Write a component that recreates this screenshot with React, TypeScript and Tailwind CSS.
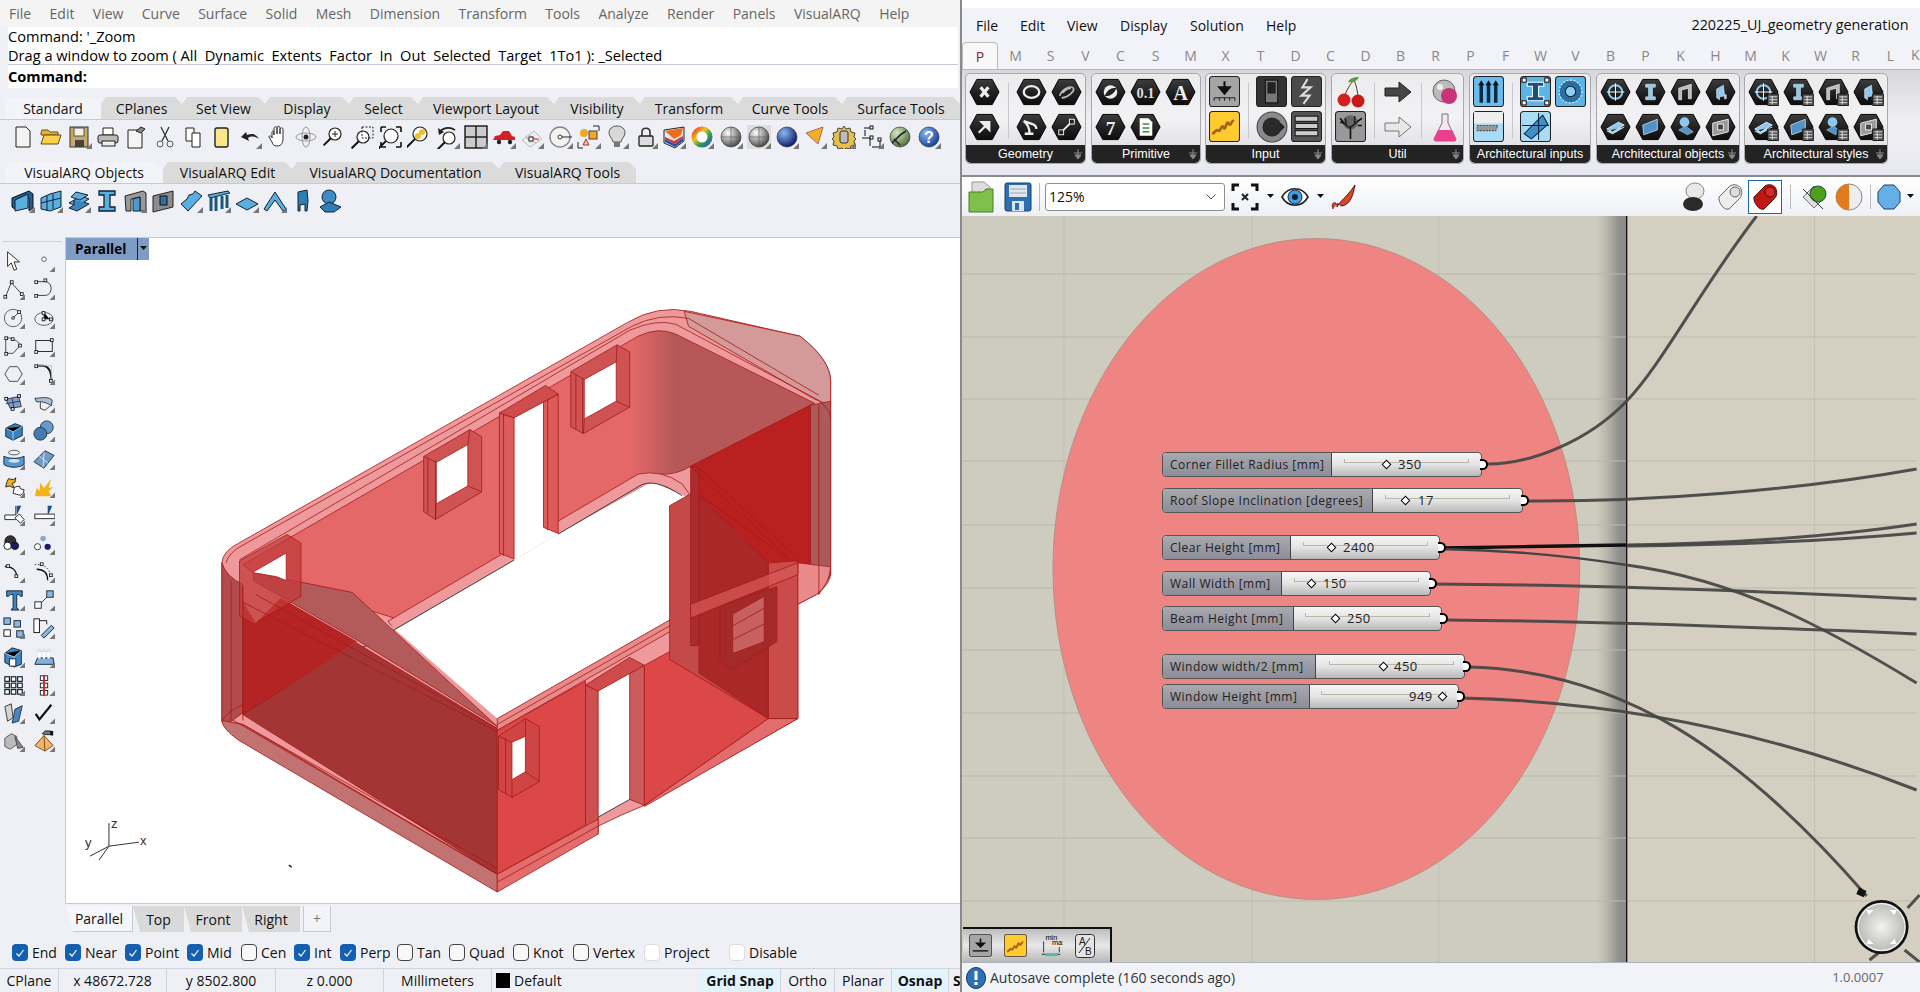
import type { ReactNode } from "react";

const FONT = "font-['Open_Sans','Liberation_Sans',sans-serif]";

// Small svg wrapper for the toolbar icons
function Ic({ children, tri, size = 24 }: { children: ReactNode; tri?: boolean; size?: number }) {
  return (
    <svg width={size} height={size} viewBox="0 0 24 24" className="shrink-0">
      {children}
      {tri && <polygon points="18,24 24,24 24,18" fill="#777" />}
    </svg>
  );
}

const glass = (x = 13, y = 9, r = 6) => (
  <>
    <circle cx={x} cy={y} r={r} fill="#fff" stroke="#222" strokeWidth="1.2" />
    <path d={`M${x - r * 0.7} ${y + r * 0.7} L${x - r * 1.9} ${y + r * 1.9}`} stroke="#111" strokeWidth="2" />
  </>
);

const ball = (id: string, a: string, b: string) => (
  <>
    <defs>
      <radialGradient id={id} cx="35%" cy="30%" r="75%">
        <stop offset="0" stopColor={a} />
        <stop offset="1" stopColor={b} />
      </radialGradient>
    </defs>
    <circle cx="12" cy="12" r="10" fill={`url(#${id})`} stroke="#222" strokeWidth="0.6" />
  </>
);

const standardIcons: { el: ReactNode; tri?: boolean }[] = [
  { el: <path d="M5 2h10l4 4v16H5z" fill="#f3f3f3" stroke="#222" /> },
  { el: <><path d="M2 8l1-3h6l2 2h8v3H2z" fill="#e5b53a" stroke="#6b4d10" /><path d="M2 19l3-9h17l-3 9z" fill="#fad24a" stroke="#6b4d10" /></> },
  { el: <><rect x="2" y="2" width="18" height="20" fill="#c8a866" stroke="#333" /><rect x="6" y="3" width="10" height="8" fill="#f3f0e4" stroke="#555" /><rect x="7" y="15" width="9" height="7" fill="#444" /></>, tri: true },
  { el: <><path d="M7 3h10v7H7z" fill="#fff" stroke="#222" /><rect x="2" y="10" width="20" height="8" rx="2" fill="#bbb" stroke="#222" /><rect x="6" y="16" width="13" height="5" fill="#eee" stroke="#222" /></> },
  { el: <><path d="M4 5h11l3 3v15H4z" fill="#f4f4f4" stroke="#222" /><path d="M12 6l5-4 4 2-4 4z" fill="#888" stroke="#222" /></> },
  { el: <><path d="M8 2l7 14M16 2L9 16" stroke="#333" strokeWidth="1.3" fill="none" /><circle cx="7" cy="19" r="3" fill="none" stroke="#555" /><circle cx="17" cy="19" r="3" fill="none" stroke="#555" /></> },
  { el: <><path d="M5 3h8v13H5z" fill="#fff" stroke="#222" /><path d="M11 8h8v14h-8z" fill="#fff" stroke="#222" /></> },
  { el: <rect x="6" y="3" width="13" height="19" rx="2" fill="#fbe789" stroke="#222" strokeWidth="1.4" /> },
  { el: <path d="M3 12l5-5 1 3c5-2 9-1 12 4-4-3-8-3-11-1l1 3z" fill="#222" />, tri: true },
  { el: <path d="M6 13V7c1-2 2-1 2 0v3-7c1-2 3-1 3 0v6-7c1-1 3-1 3 1v6-5c1-2 3-1 3 0v9c0 4-1 8-6 8-3 0-4-1-5-4l-3-5c0-2 2-1 3 0z" fill="#fff" stroke="#333" strokeWidth="1" /> },
  { el: <><ellipse cx="12" cy="12" rx="10" ry="4" fill="none" stroke="#999" /><ellipse cx="12" cy="12" rx="4" ry="10" fill="none" stroke="#999" /><circle cx="12" cy="12" r="2.5" fill="#222" /></> },
  { el: <>{glass()}<path d="M13 6v6M10 9h6" stroke="#222" /></> },
  { el: <>{glass(12, 12, 6)}<rect x="11" y="2" width="11" height="11" fill="none" stroke="#222" strokeDasharray="2 1.5" /></> },
  { el: <>{glass(12, 11, 7)}<path d="M2 2h5M2 2v5M22 2h-5M22 2v5M2 22h5M2 22v-5M22 22h-5M22 22v-5" stroke="#111" strokeWidth="1.6" fill="none" /></> },
  { el: <>{glass(13, 9, 7)}<circle cx="15" cy="7" r="3" fill="#f0c020" /><circle cx="11" cy="11" r="3" fill="#f0c020" /></> },
  { el: <>{glass(13, 13, 6)}<path d="M3 8c3-5 10-7 16-3" fill="none" stroke="#222" strokeWidth="1.6" /><path d="M2 3l1 7 5-3z" fill="#222" /></>, tri: true },
  { el: <><rect x="1" y="1" width="22" height="22" fill="#ccc" stroke="#222" strokeWidth="1.5" /><path d="M12 1v22M1 12h22" stroke="#222" strokeWidth="1.5" /></>, tri: true },
  { el: <><path d="M1 15l2-4 5-1 3-4h6l3 5 3 1v3z" fill="#d32020" /><circle cx="7" cy="17" r="2.2" fill="#222" /><circle cx="18" cy="17" r="2.2" fill="#222" /></>, tri: true },
  { el: <><path d="M2 15l12-9 8 8-12 8z" fill="#eee" stroke="#bbb" /><path d="M6 13l10 5M9 10l10 6M11 18l-5-7" stroke="#bbb" /><rect x="9" y="12" width="4" height="4" fill="#fff" stroke="#222" /><path d="M13 14h6" stroke="#c33" /></>, tri: true },
  { el: <><circle cx="11" cy="12" r="10" fill="#f3f3f3" stroke="#888" strokeWidth="1.4" /><circle cx="11" cy="12" r="2" fill="#fff" stroke="#333" /><path d="M13 12h10" stroke="#222" /></>, tri: true },
  { el: <><circle cx="7" cy="8" r="4" fill="#eaa92a" /><rect x="12" y="6" width="8" height="8" fill="#f2a922" stroke="#444" /><path d="M9 14l3 6H6z" fill="#f0c7a0" stroke="#a33" /><path d="M16 1h6v5M1 17v6h5" stroke="#222" fill="none" /></>, tri: true },
  { el: <><path d="M12 1c5 0 8 3 8 7 0 3-3 5-4 9H8C7 13 4 11 4 8c0-4 3-7 8-7z" fill="#d8d8d8" stroke="#555" /><rect x="9" y="17" width="6" height="5" fill="#777" /></>, tri: true },
  { el: <><path d="M8 11V7c0-5 8-5 8 0v4" fill="none" stroke="#333" strokeWidth="1.6" /><rect x="5" y="11" width="14" height="10" rx="1" fill="#ddd" stroke="#222" strokeWidth="1.3" /></>, tri: true },
  { el: <><path d="M2 5l20-3v14l-9 7-11-5z" fill="#e8e8ea" stroke="#222" /><path d="M3 6l18-3-2 7-7 4z" fill="#ee6b1c" /><path d="M3 14l10 5 8-6v3l-8 6-10-5z" fill="#2450a8" /><path d="M3 12l9 4 9-5v2l-8 6-10-5z" fill="#c43a3a" /></>, tri: true },
  { el: <circle cx="12" cy="12" r="8" fill="#fff" stroke="url(#wheel)" strokeWidth="5" />, tri: true },
  { el: <>{ball("sg1", "#fff", "#444")}<path d="M12 2v20M2 12h20" stroke="#555" strokeWidth="0.6" /></>, tri: true },
  { el: <><rect x="0" y="0" width="24" height="24" fill="#ddd" />{ball("sg2", "#fff", "#444")}<path d="M12 2v20M2 12h20" stroke="#555" strokeWidth="0.6" /></>, tri: true },
  { el: ball("sg3", "#8db6f0", "#04186b"), tri: true },
  { el: <path d="M3 8l17-6-5 17z" fill="#f2b024" stroke="#a66" />, tri: true },
  { el: <><path d="M12 1l2 3 4-1 1 4 4 1-1 4 2 2-2 2 1 4-4 1-1 3-4-1-2 2-2-2-4 1-1-3-4-1 1-4-2-2 2-2-1-4 4-1 1-4 4 1z" fill="#e6c04a" stroke="#444" /><rect x="8" y="6" width="8" height="12" rx="2" fill="#bbb" stroke="#333" /></>, tri: true },
  { el: <><path d="M4 3h6M5 5v6M2 13h8v8M12 22h8M20 15v7" stroke="#111" fill="none" /><rect x="10" y="1" width="3" height="3" fill="#fff" stroke="#111" /><rect x="10" y="11" width="3" height="3" fill="#fff" stroke="#111" /><rect x="18" y="13" width="3" height="3" fill="#fff" stroke="#111" /></>, tri: true },
  { el: <>{ball("sg4", "#d7e8c4", "#4d6a3a")}<path d="M4 18c4-3 5-7 14-12M6 14l6 6" stroke="#222" strokeWidth="1.6" fill="none" /></> },
  { el: <>{ball("sg5", "#8ab8ee", "#0d3e97")}<text x="12" y="18" textAnchor="middle" fontSize="16" fontWeight="700" fill="#fff" fontFamily="Liberation Sans">?</text></>, tri: true },
];

const blue = "#5aaee0";
const vaIcons: { el: ReactNode; tri?: boolean }[] = [
  { el: <><path d="M1 9l17-7 4 3v14l-4 3V9L5 13v8l-4-3z" fill="#1e5f94" stroke="#111" /><path d="M4 11l13-6v14L4 22z" fill={blue} stroke="#123" /></>, tri: true },
  { el: <><path d="M2 9l9-4 11-3v16l-11 4-9-2z" fill={blue} stroke="#123" /><path d="M8 7v15M14 5v15M2 14l20-5" stroke="#123" /></>, tri: true },
  { el: <><path d="M2 14l12-7 8 3-12 7z" fill={blue} stroke="#123" /><path d="M7 11v5l-5 3 8 3 12-7-5-2" fill="#3e85bd" stroke="#123" /><path d="M9 3l12 3-8 5-9-3z" fill={blue} stroke="#123" /></>, tri: true },
  { el: <path d="M4 2h16v4h-5v12h5v4H4v-4h5V6H4z" fill={blue} stroke="#123" strokeWidth="1.3" /> },
  { el: <><path d="M2 7l18-5 3 2v18l-6 0V8L8 10v12H3z" fill="#999" stroke="#222" /><path d="M10 10l7-2v14l-7 0z" fill="#4b9ad0" stroke="#123" /></>, tri: true },
  { el: <><path d="M2 7l20-5v16L2 23z" fill="#8c8c8c" stroke="#222" /><rect x="9" y="7" width="7" height="9" fill="#2f6fa0" stroke="#111" /></> },
  { el: <path d="M2 15l6-5 2-4 4-1 2-3 7 5-14 15z" fill={blue} stroke="#123" />, tri: true },
  { el: <><path d="M1 6l20-4 2 2-20 5z" fill={blue} stroke="#123" /><path d="M4 9v13M9 8v14M15 7v13M20 6v13" stroke="#1c567f" strokeWidth="3" /></>, tri: true },
  { el: <path d="M1 15l11-6 11 6-11 6z" fill={blue} stroke="#123" />, tri: true },
  { el: <path d="M1 20l11-17 11 17-3 2-8-11-8 11z" fill={blue} stroke="#123" />, tri: true },
  { el: <path d="M7 11V3l9-2 1 11-1 10h-2v-7l-5 1v6H7z" fill="#2e7fb5" stroke="#123" /> },
  { el: <><circle cx="10" cy="8" r="7" fill="#3e8cc2" stroke="#123" /><path d="M1 18l9-5 12 5-7 5H6z" fill="#2e7fb5" stroke="#123" /></> },
];

const toolIcons: ReactNode[] = [
  <path d="M5 2l13 11h-6l3 8-3 1-3-8-4 4z" fill="#fff" stroke="#222" />,
  <circle cx="12" cy="10" r="2.5" fill="#fff" stroke="#555" />,
  <><path d="M3 20L9 5l11 12" fill="none" stroke="#333" /><rect x="1" y="19" width="3" height="3" fill="#fff" stroke="#222" /><rect x="8" y="3" width="3" height="3" fill="#fff" stroke="#222" /><rect x="19" y="16" width="3" height="3" fill="#fff" stroke="#222" /></>,
  <><path d="M4 4h9c9 0 9 15 0 15H4" fill="none" stroke="#333" /><rect x="2" y="3" width="3" height="3" fill="#fff" stroke="#222" /><rect x="12" y="1" width="3" height="3" fill="#fff" stroke="#222" /><rect x="2" y="18" width="3" height="3" fill="#fff" stroke="#222" /></>,
  <><circle cx="11" cy="12" r="9.5" fill="none" stroke="#555" /><path d="M11 12l6-6" stroke="#333" /><circle cx="11" cy="12" r="1.5" fill="#fff" stroke="#222" /><rect x="16" y="4" width="3" height="3" fill="#fff" stroke="#222" /></>,
  <><ellipse cx="12" cy="13" rx="10" ry="7" fill="none" stroke="#555" /><path d="M12 6v7h6" stroke="#333" /><rect x="10" y="5" width="3" height="3" fill="#fff" stroke="#222" /><rect x="10" y="12" width="3" height="3" fill="#fff" stroke="#222" /><rect x="18" y="12" width="3" height="3" fill="#fff" stroke="#222" /></>,
  <><path d="M3 3v17h8l8-9c-3-5-9-8-16-8z" fill="none" stroke="#444" />{[[2, 2], [2, 19], [17, 10], [9, 3]].map(([x, y]) => <rect key={x * y} x={x} y={y} width="3" height="3" fill="#fff" stroke="#222" />)}</>,
  <><rect x="3" y="6" width="18" height="12" fill="none" stroke="#222" /><rect x="2" y="17" width="3" height="3" fill="#fff" stroke="#222" /><rect x="19" y="4" width="3" height="3" fill="#fff" stroke="#222" /></>,
  <path d="M7 4h9l5 8-5 8H7l-5-8z" fill="none" stroke="#444" />,
  <><path d="M4 3h6c8 0 10 7 10 16" fill="none" stroke="#111" strokeWidth="2" /><path d="M4 3h16v16" fill="none" stroke="#bbb" /><rect x="2" y="2" width="3" height="3" fill="#fff" stroke="#222" /><rect x="18" y="18" width="3" height="3" fill="#fff" stroke="#222" /></>,
  <><path d="M3 9l14-3 3 11-12 2z" fill="#7d9fc9" stroke="#333" /><path d="M10 8l2 11M3 14l16-3" stroke="#335" /><rect x="2" y="7" width="3" height="3" fill="#fff" stroke="#111" /><rect x="16" y="4" width="3" height="3" fill="#fff" stroke="#111" /><rect x="9" y="18" width="3" height="3" fill="#fff" stroke="#111" /></>,
  <><path d="M2 8c6 0 10-2 16 0l3 2-1 6c-6-4-12-5-16-4z" fill="#a9bfda" stroke="#333" /><path d="M8 12v7l5 2 6-5" fill="none" stroke="#333" /></>,
  <><path d="M3 9l10-5 8 3v10l-10 5-8-4z" fill="#3b80bb" stroke="#123" /><path d="M3 9l8 4 10-6M11 13v9" stroke="#a8d0ef" /></>,
  <><circle cx="15" cy="8" r="7" fill="#6a99cc" stroke="#234" /><circle cx="8" cy="15" r="7" fill="#467bb2" stroke="#234" /></>,
  <><ellipse cx="12" cy="5" rx="6" ry="2.5" fill="none" stroke="#555" /><path d="M1 9c6 3 16 3 22 0v9c-6 4-16 4-22 0z" fill="#5797cf" stroke="#123" /><ellipse cx="12" cy="14" rx="6" ry="2" fill="#cfe3f4" /></>,
  <><path d="M1 15L13 3l10 5-11 14z" fill="#7199c9" stroke="#234" /><path d="M7 9l10 8M12 5l-1 16" stroke="#dbe9f6" /></>,
  <><path d="M6 3l5 1 3-2-1 5-3 1 2 5-5-2-4 1 1-5z" fill="#eeb21e" stroke="#222" /><path d="M13 12l5-1 1 3 4 1-1 4-3 2-4-1-4-1 1-5z" fill="#fff" stroke="#222" /></>,
  <><path d="M2 22l2-9 3 3 1-9 4 6 8-10-3 10 5-1-5 5 3 5z" fill="#f2b21b" /></>,
  <><path d="M14 2v10H2v5h12" fill="#fff" stroke="#222" /><path d="M15 2h5l-5 10z" fill="#1c4f86" /><path d="M13 15l5-4 5 6-4 4z" fill="#fff" stroke="#222" /></>,
  <><path d="M16 2h5l-4 9h-1z" fill="#1c4f86" /><rect x="2" y="11" width="22" height="5" fill="#fff" stroke="#222" /></>,
  <><circle cx="8" cy="9" r="6" fill="#333" stroke="#111" /><circle cx="5" cy="14" r="4" fill="#fff" stroke="#111" /><circle cx="13" cy="14" r="4" fill="#1a1a70" stroke="#111" /></>,
  <><circle cx="11" cy="6" r="3" fill="#8ea9c8" /><circle cx="5" cy="15" r="3.4" fill="#fff" stroke="#333" /><circle cx="16" cy="15" r="3.4" fill="#1a1a70" /></>,
  <><path d="M2 6c8 0 13 4 13 12" fill="none" stroke="#111" strokeWidth="1.4" /><rect x="4" y="4" width="3" height="3" fill="#fff" stroke="#222" /><rect x="13" y="15" width="3" height="3" fill="#fff" stroke="#222" /></>,
  <><path d="M2 4c9-1 17 4 17 13" fill="none" stroke="#222" strokeDasharray="1.5 2" /><path d="M4 9c8 0 12 4 12 12" fill="none" stroke="#111" strokeWidth="1.4" /><rect x="8" y="2" width="3" height="3" fill="#fff" stroke="#222" /><rect x="18" y="14" width="3" height="3" fill="#fff" stroke="#222" /></>,
  <path d="M4 2h17v6h-2l-2-2h-2v15l2 1v1H9v-1l2-1V6H8L6 8H4z" fill="#3f86c4" stroke="#123" />,
  <><path d="M3 21L21 3" stroke="#333" /><rect x="2" y="14" width="7" height="7" fill="#fff" stroke="#222" /><rect x="15" y="2" width="7" height="7" fill="#8fb7dd" stroke="#222" /></>,
  <><rect x="1" y="1" width="7" height="7" fill="#8fb7dd" stroke="#123" /><rect x="1" y="14" width="7" height="7" fill="#fff" stroke="#111" /><rect x="12" y="4" width="7" height="7" fill="#8fb7dd" stroke="#123" /><rect x="15" y="15" width="7" height="7" fill="#8fb7dd" stroke="#123" /></>,
  <><rect x="1" y="2" width="6" height="15" fill="#fff" stroke="#111" /><path d="M7 4h8v4" fill="none" stroke="#111" /><path d="M9 20l11-11 3 3-11 11z" fill="#8fb7dd" stroke="#123" /></>,
  <><path d="M2 8l8-6 10 3v15l-8 3-10-5z" fill="#3f86c4" stroke="#123" /><path d="M2 8l10 4 8-7M12 12v11" stroke="#bcdaf1" /><path d="M7 22v-8h7v8z" fill="#fff" stroke="#123" /></>,
  <><path d="M2 20l3-7h17l1 7z" fill="#7fb0dd" stroke="#123" /><path d="M7 5v9M12 5v9M17 5v9" stroke="#fff" strokeWidth="2.4" /><path d="M5 6l2-3 2 3zM10 6l2-3 2 3zM15 6l2-3 2 3z" fill="#fff" stroke="#999" strokeWidth="0.4" /></>,
  <>{[3, 10, 17].flatMap((y) => [2, 9, 16].map((x) => <rect key={`${x}${y}`} x={x} y={y} width="5" height="5" fill="#fff" stroke="#123" strokeWidth="1.3" />))}</>,
  <><rect x="8" y="2" width="8" height="5" fill="#fff" stroke="#222" /><rect x="8" y="10" width="8" height="5" fill="#fff" stroke="#222" /><rect x="8" y="18" width="8" height="5" fill="#fff" stroke="#222" /><path d="M12 1v23" stroke="#c22" strokeWidth="2" /></>,
  <><path d="M2 5l7-3 2 15-6 4z" fill="#d4d4d4" stroke="#333" /><path d="M13 8l8-4-4 17-7 2z" fill="#4c83c1" stroke="#234" /></>,
  <path d="M3 13l4 6L20 3" stroke="#111" strokeWidth="2.4" fill="none" />,
  <><path d="M2 9l7-5 6 3v9l-7 5-6-3z" fill="#bbb" stroke="#555" /><path d="M16 20l-3-13 9 12z" fill="#888" stroke="#444" /></>,
  <><path d="M2 17L12 6l10 11-9 6z" fill="#f0b566" stroke="#7a4a14" /><path d="M12 6l1 17" stroke="#7a4a14" /><path d="M10 4l3-3h6v4h-6z" fill="#777" stroke="#222" /><rect x="19" y="1" width="3" height="5" fill="#111" /></>,
];

function Tab({ label, width, active }: { label: string; width: string; active?: boolean }) {
  return (
    <div
      className={`${width} h-full flex items-center justify-center text-[14px] text-[#111] [clip-path:polygon(5px_0,calc(100%-7px)_0,100%_7px,100%_100%,0_100%,0_7px)] ${
        active ? "bg-[#f3f4f9]" : "bg-[#dbdbdb]"
      }`}
    >
      {label}
    </div>
  );
}

function Check({ label, state, width }: { label: string; state: "on" | "off" | "faint"; width: string }) {
  return (
    <div className={`flex items-center ${width}`}>
      <div
        className={`w-[16px] h-[17px] rounded-[4px] flex items-center justify-center mr-[4px] ${
          state === "on" ? "bg-[#155fb0]" : state === "off" ? "border border-[#444] bg-[#f8f8f8]" : "border border-[#ddd] bg-white"
        }`}
      >
        {state === "on" && (
          <svg width="10" height="10" viewBox="0 0 10 10">
            <path d="M1.5 5.5l2.5 2.5 4.5-6" fill="none" stroke="#fff" strokeWidth="1.2" />
          </svg>
        )}
      </div>
      {label}
    </div>
  );
}

function StatusCell({ label, className }: { label: ReactNode; className: string }) {
  return <div className={`h-full flex items-center justify-center border-r border-[#cfd3dd] shrink-0 ${className}`}>{label}</div>;
}

// The house model, drawn in a 1568 x 1568 box that is stretched over the viewport
function Model() {
  const line = "#a81a1a";
  return (
    <g transform="translate(200 290) scale(0.4209 0.3954)" stroke={line} strokeWidth="2" strokeLinejoin="round">
      <defs>
        <linearGradient id="backWall" x1="1020" x2="1130" y1="0" y2="0" gradientUnits="userSpaceOnUse">
          <stop offset="0" stopColor="#e56868" />
          <stop offset="1" stopColor="#b65858" />
        </linearGradient>
      </defs>
      {/* shell */}
      <path d="M50 690Q52 660 90 640L1015 80Q1085 35 1165 52L1425 115Q1498 175 1498 230V720Q1495 745 1465 770L1420 795V1085L1055 1305L1000 1330L705 1480L100 1100L50 1090Z" fill="#ee9a9c" />
      <path d="M1150 52L1425 115Q1498 175 1498 230V290L1460 275L1160 90Z" fill="#d49a9a" />
      <path d="M100 695L1040 115Q1090 90 1130 110L1460 285L1165 445Q1130 468 1090 465L1040 470L740 665L460 830L130 720Z" fill="url(#backWall)" />
      <path d="M445 838L1040 465Q1095 452 1145 490L1165 520L1145 525Q1090 485 1050 497L460 860Z" fill="#ee9a9c" />
      <path d="M60 690Q65 665 100 645L1025 90Q1090 55 1160 70L1470 265M92 682L1020 100Q1085 70 1130 85L1470 278" fill="none" />
      {/* back wall openings */}
      <path d="M530 420L640 352L668 370V510L558 580L530 560Z" fill="#cf5353" />
      <path d="M560 435L635 390V495L560 540Z" fill="#fff" />
      <path d="M530 420L560 435M640 352L635 390M668 510L635 495M558 580L560 540M540 425V565M558 430V580" fill="none" />
      <path d="M880 205L990 137L1020 155V295L910 362L880 345Z" fill="#cf5353" />
      <path d="M912 225L988 180V280L912 325Z" fill="#fff" />
      <path d="M880 205L912 225M990 137L988 180M1020 295L988 280M910 362L912 325M892 212V352M908 222V362" fill="none" />
      <path d="M745 322L815 282V600L850 617L745 683Z" fill="#fff" stroke="none" />
      <path d="M710 310L745 322V680L710 665Z" fill="#dc5c5c" />
      <path d="M815 282L850 262V615L815 600Z" fill="#dc5c5c" />
      <path d="M710 310L820 240L850 262L745 322Z" fill="#cf4d4d" />
      <path d="M720 315V672M825 275V608" fill="none" />
      {/* floor opening */}
      <path d="M460 860L745 683L850 617L1050 497Q1075 480 1100 497L1160 525L1115 545V835L705 1085L430 830Z" fill="#fff" stroke="none" />
      <path d="M100 1075L460 860L745 683M850 617L1040 497Q1075 470 1145 520" fill="none" stroke="#222" strokeWidth="2" />
      {/* left end */}
      <path d="M50 690Q60 725 100 745V1070L75 1090Q50 1100 50 1090Z" fill="#b24c4c" />
      <path d="M100 790L130 845L190 780L370 890L100 1075Z" fill="#b52424" />
      <path d="M125 715L360 765L705 1105L370 885L190 775L125 735Z" fill="#b35a5a" />
      <path d="M92 685L205 618L238 640V775L125 845L92 825Z" fill="#c13b3b" fillOpacity="0.75" />
      <path d="M125 713L203 665V735L180 725L125 715Z" fill="#fff" />
      <path d="M100 1075L370 893L705 1110V1480Z" fill="#a33535" />
      <path d="M50 1090Q50 1110 90 1140L705 1525V1480L100 1100Z" fill="#c37272" />
      <path d="M50 1095Q55 1070 100 1050M130 770L705 1110M100 790L705 1118M75 1088L705 1480M100 1100L705 1465M100 750V1090M72 735V1090" fill="none" />
      {/* front wall */}
      <path d="M705 1085L1115 835L1420 690V720L1115 865L705 1115Z" fill="#e88a8a" />
      <path d="M705 1100L1115 850L1420 705" fill="none" />
      <path d="M705 1115L915 990V1355L705 1480Z" fill="#dc4748" />
      <path d="M945 1015L1020 970V1290L945 1335Z" fill="#fff" stroke="none" />
      <path d="M915 1000L945 1015V1378L915 1355Z" fill="#cc5050" />
      <path d="M1020 970L1055 950V1305L1020 1290Z" fill="#cc5c5c" />
      <path d="M915 1000L1020 930L1055 950L945 1015Z" fill="#cf4a4a" />
      <path d="M945 1335L1020 1290" fill="none" stroke="#222" strokeWidth="2" />
      <path d="M1055 950L1115 915L1350 1085L1055 1305Z" fill="#dc4748" />
      <path d="M705 1480V1525L945 1378V1340Z" fill="#e36c6c" />
      <path d="M705 1500L945 1358" fill="none" />
      <path d="M1055 1305L1350 1085H1420L1055 1308Z" fill="#e36c6c" />
      <path d="M708 1130L772 1085L805 1105V1245L740 1285L708 1265Z" fill="#cf4545" />
      <path d="M740 1145L772 1130V1220L740 1240Z" fill="#fff" />
      <path d="M708 1130L740 1145M772 1085V1130M805 1245L772 1220M740 1285V1240M725 1135V1275" fill="none" />
      {/* right block */}
      <path d="M1115 545L1165 515L1350 690V1085L1115 935Z" fill="#c44a4a" />
      <path d="M1165 445L1450 290V700L1350 690L1185 520Z" fill="#ba2020" />
      <path d="M1165 445L1185 450V900L1165 900Z" fill="#a92c2c" />
      <path d="M1185 520L1350 690V1085L1185 970Z" fill="#ab2828" />
      <path d="M1350 690L1420 685V1085H1350Z" fill="#cb4a4a" />
      <path d="M1450 290L1498 280V720L1470 770L1450 750Z" fill="#ab5a5a" />
      <path d="M1165 445L1400 680M1185 450L1420 680M1190 520L1395 680" fill="none" />
      <path d="M1235 800L1370 750V890L1265 960L1235 940Z" fill="#a42a2a" />
      <path d="M1265 820L1340 775V890L1265 920Z" fill="#c76060" />
      <path d="M1265 850L1340 805M1265 885L1340 845" fill="none" />
      <path d="M1420 690L1498 700Q1495 745 1465 770L1420 795Z" fill="#e88a8a" />
      <path d="M1165 795L1420 690V720L1165 830Z" fill="#d85a5a" fillOpacity="0.7" />
      <path d="M1470 280Q1500 300 1498 330M1470 290V770" fill="none" />
    </g>
  );
}

const sliders = [
  { label: "Corner Fillet Radius [mm]", value: "350", box: "left-[200px] top-[236px] w-[320px]", split: "w-[169px]", track: "left-[181px] w-[125px]", dia: "left-[220px]", val: "left-[235px]" },
  { label: "Roof Slope Inclination [degrees]", value: "17", box: "left-[200px] top-[272px] w-[361px]", split: "w-[210px]", track: "left-[222px] w-[125px]", dia: "left-[239px]", val: "left-[255px]" },
  { label: "Clear Height [mm]", value: "2400", box: "left-[200px] top-[319px] w-[278px]", split: "w-[128px]", track: "left-[140px] w-[125px]", dia: "left-[165px]", val: "left-[180px]" },
  { label: "Wall Width [mm]", value: "150", box: "left-[200px] top-[355px] w-[269px]", split: "w-[119px]", track: "left-[131px] w-[125px]", dia: "left-[145px]", val: "left-[160px]" },
  { label: "Beam Height [mm]", value: "250", box: "left-[200px] top-[390px] w-[280px]", split: "w-[131px]", track: "left-[142px] w-[125px]", dia: "left-[169px]", val: "left-[184px]" },
  { label: "Window width/2 [mm]", value: "450", box: "left-[200px] top-[438px] w-[303px]", split: "w-[153px]", track: "left-[166px] w-[125px]", dia: "left-[217px]", val: "left-[231px]" },
  { label: "Window Height [mm]", value: "949", box: "left-[200px] top-[468px] w-[297px]", split: "w-[147px]", track: "left-[158px] w-[125px]", dia: "left-[276px]", val: "left-[246px]" },
];

function Slider({ s }: { s: (typeof sliders)[number] }) {
  return (
    <div className={`absolute ${s.box} h-[25px] flex rounded-[4px] border border-[#555] bg-gradient-to-b from-[#f6f6f6] via-[#e4e4e4] to-[#b9b9b9] text-[12px] tracking-[0.5px] text-[#222]`}>
      <div className={`${s.split} shrink-0 h-full flex items-center pl-[7px] rounded-l-[4px] border-r border-[#444] bg-gradient-to-b from-[#a9a9b0] to-[#8d8d99] whitespace-nowrap`}>
        {s.label}
      </div>
      <div className={`absolute ${s.track} top-[6px] h-[4px] border-b border-l border-r border-[#b9b8aa]`} />
      <div className={`absolute ${s.dia} top-[8px] w-[7px] h-[7px] rotate-45 bg-white border-[1.5px] border-black`} />
      <div className={`absolute ${s.val} top-[2px] text-[13px]`}>{s.value}</div>
      <div className="absolute -right-[7px] top-[6px] w-[8px] h-[11px] rounded-r-full bg-white border-2 border-l-0 border-black" />
    </div>
  );
}

const wires = [
  "M1482 464C1530 466 1590 440 1627 401S1700 290 1757 216",
  "M1525 501C1650 502 1800 490 1917 469",
  "M1627 545C1720 544 1830 537 1917 524",
  "M1627 546C1720 545 1830 541 1917 533",
  "M1627 565C1740 580 1830 630 1917 683",
  "M1433 584C1600 585 1780 592 1917 599",
  "M1445 620C1620 621 1800 629 1917 634",
  "M1468 667C1620 670 1740 750 1867 896",
  "M1461 698C1640 702 1790 740 1917 790",
  "M1908 908L1920 895M1870 960L1880 952M1905 950L1920 962",
];

const ribbonLetters = "M S V C S M X T D C D B R P F W V B P K H M K W R L".split(" ");

function Hex({ children }: { children?: ReactNode }) {
  return (
    <svg width="31" height="28" viewBox="0 0 32 28" className="shrink-0">
      <defs>
        <linearGradient id="hexFill" x1="0" x2="0" y1="0" y2="1">
          <stop offset="0" stopColor="#3c3c3c" />
          <stop offset="0.5" stopColor="#222" />
          <stop offset="1" stopColor="#0d0d0d" />
        </linearGradient>
      </defs>
      <polygon points="1,14 8,1 24,1 31,14 24,27 8,27" fill="url(#hexFill)" stroke="#000" />
      {children}
    </svg>
  );
}

function Sq({ children, bg = "#3a3a3a", size = 31 }: { children?: ReactNode; bg?: string; size?: number }) {
  return (
    <svg width={size} height={size} viewBox="0 0 30 30" className="shrink-0">
      <rect x="0.5" y="0.5" width="29" height="29" rx="3" fill={bg} stroke="#222" />
      {children}
    </svg>
  );
}

function Cell({ children }: { children?: ReactNode }) {
  return <div className="w-[35px] h-[35px] flex items-center justify-center">{children}</div>;
}

function Label({ text, plus = true }: { text: string; plus?: boolean }) {
  return (
    <div className="absolute left-0 right-0 bottom-0 h-[18px] rounded-b-[5px] bg-[#232323] flex items-center justify-center font-['Liberation_Sans',sans-serif] text-[12.5px] leading-none text-white whitespace-nowrap">
      {text}
      {plus && (
        <svg width="10" height="10" viewBox="0 0 10 10" className="absolute right-[2px] top-[4px]">
          <path d="M5 0v6M1 4h8M2 6h6L5 10z" stroke="#888" fill="#888" />
        </svg>
      )}
    </div>
  );
}

function Group({ width, label, plus, children }: { width: string; label: string; plus?: boolean; children: ReactNode }) {
  return (
    <div className={`relative ${width} h-[91px] shrink-0 rounded-[5px] border border-[#a9a9ad] bg-gradient-to-b from-[#ececee] via-[#f2f2f4] to-[#d9d9de] flex items-start pl-[1px]`}>
      {children}
      <Label text={label} plus={plus} />
    </div>
  );
}

const Col = ({ children }: { children: ReactNode }) => <div className="grid grid-rows-[35px_35px] grid-flow-col auto-cols-[35px]">{children}</div>;
const Sep = () => <div className="w-px h-[56px] my-[9px] mx-[5.5px] bg-[#c8c8cc] shrink-0" />;

const hexStroke = { fill: "none", stroke: "#eee", strokeWidth: 2.4 };
const archBlue = "#8fc8ee";

function HexBadge() {
  return (
    <g>
      <rect x="20" y="16" width="12" height="12" rx="1" fill="#555" stroke="#111" />
      <path d="M22 19h8M22 22h8M22 25h8M25 18v9" stroke="#ddd" />
    </g>
  );
}

const archGlyphs = {
  target: <><circle cx="16" cy="14" r="7" fill="none" stroke={archBlue} strokeWidth="2" /><path d="M16 5v18M7 14h18" stroke="#fff" /></>,
  column: <path d="M11 6h10v3h-3v10h3v3H11v-3h3V9h-3z" fill={archBlue} stroke="#fff" strokeWidth="0.5" />,
  door: <path d="M9 22V10l13-4v15h-3V10l-7 2v10z" fill="#bbb" stroke="#fff" strokeWidth="0.6" />,
  chair: <path d="M12 20v-9l7-4 1 9 2 1v4h-2v-3l-5 1v3z" fill={archBlue} stroke="#fff" strokeWidth="0.5" />,
  beam: <path d="M7 16l12-7 6 3-12 7zM7 18l6 3 12-7" fill={archBlue} stroke="#fff" strokeWidth="0.8" />,
  wall: <path d="M8 12l15-6v11L9 22z" fill="#4f93c8" stroke="#ddd" strokeWidth="0.8" />,
  person: <><circle cx="15" cy="9" r="5" fill={archBlue} /><path d="M9 17l7-4 8 6-6 3z" fill="#4f93c8" stroke="#ddd" strokeWidth="0.5" /></>,
  window: <><path d="M8 10l16-4v13L8 23z" fill="#999" stroke="#eee" /><rect x="13" y="11" width="6" height="6" fill="#444" stroke="#eee" /></>,
};

function Ribbon() {
  const g = archGlyphs;
  return (
    <div className="h-[107px] shrink-0 flex items-start pt-[3px] pl-[3px] bg-gradient-to-b from-[#d8d8dc] via-[#f0f0f4] to-[#e8e9f0] border-b-2 border-[#8b8b8b]">
      <div className="w-[121px] shrink-0 mr-[5px]">
        <Group width="w-[121px]" label="Geometry" plus>
          <Col>
            <Cell><Hex><path d="M12 9l8 10M20 9l-8 10" stroke="#eee" strokeWidth="3.4" /></Hex></Cell>
            <Cell><Hex><path d="M10 20l10-10M13 9h8v8z" stroke="#eee" strokeWidth="2.2" fill="#eee" /></Hex></Cell>
          </Col>
          <Sep />
          <Col>
            <Cell><Hex><ellipse cx="16" cy="14" rx="8" ry="6" {...hexStroke} /></Hex></Cell>
            <Cell><Hex><path d="M9 21h9M14 21c0-6-2-10-6-13l9 3c3 1 4 3 4 5" {...hexStroke} /></Hex></Cell>
            <Cell><Hex><path d="M9 18c2-7 12-11 14-8s-6 10-12 10M12 15c3-4 7-6 8-4" fill="none" stroke="#bbb" strokeWidth="1.8" /></Hex></Cell>
            <Cell><Hex><path d="M11 19l10-10" stroke="#eee" strokeWidth="2" /><rect x="8" y="17" width="5" height="5" fill="#222" stroke="#eee" /><rect x="19" y="6" width="5" height="5" fill="#222" stroke="#eee" /></Hex></Cell>
          </Col>
        </Group>
      </div>
      <div className="mr-[4px]">
        <Group width="w-[110px]" label="Primitive" plus>
          <Col>
            <Cell><Hex><circle cx="16" cy="14" r="7" fill="#eee" /><path d="M10 18c4 1 10-2 12-8-2 0-8-1-12 8z" fill="#222" /></Hex></Cell>
            <Cell><Hex><text x="16" y="22" textAnchor="middle" fontSize="20" fontWeight="700" fontFamily="Liberation Serif" fill="#eee">7</text></Hex></Cell>
            <Cell><Hex><text x="16" y="20" textAnchor="middle" fontSize="15" fontWeight="700" fontFamily="Liberation Serif" fill="#ddd">0.1</text></Hex></Cell>
            <Cell><Hex><path d="M10 5h9l4 4v14H10z" fill="#fff" /><path d="M13 11h7M13 15h7M13 19h7" stroke="#3a8a3a" strokeWidth="1.6" /></Hex></Cell>
            <Cell><Hex><text x="16" y="22" textAnchor="middle" fontSize="21" fontWeight="700" fontFamily="Liberation Serif" fill="#eee">A</text></Hex></Cell>
          </Col>
        </Group>
      </div>
      <div className="mr-[5px]">
        <Group width="w-[121px]" label="Input" plus>
          <Col>
            <Cell>
              <Sq bg="#a5a5a5"><path d="M15 5v9M10 11l5 6 5-6z" stroke="#111" fill="#111" strokeWidth="2" /><path d="M5 21h20M5 21v3M10 21v3M15 21v3M20 21v3M25 21v3" stroke="#222" /></Sq>
            </Cell>
            <Cell>
              <Sq bg="#ffcb2f"><path d="M3 22c3-1 4-5 6-3s3-7 5-3 3-8 5-4 3-4 5-2" fill="none" stroke="#a9601a" strokeWidth="2.6" /></Sq>
            </Cell>
          </Col>
          <Sep />
          <Col>
            <Cell>
              <Sq bg="#333"><rect x="9" y="4" width="12" height="22" fill="#777" stroke="#111" /><rect x="11" y="6" width="8" height="11" fill="#222" /></Sq>
            </Cell>
            <Cell>
              <svg width="32" height="32" viewBox="0 0 30 30">
                <circle cx="15" cy="15" r="14" fill="#8b8b8b" stroke="#444" />
                <circle cx="15" cy="15" r="9" fill="#2a2a2a" />
                <path d="M23 11l4 4-4 4z" fill="#222" />
              </svg>
            </Cell>
            <Cell>
              <Sq bg="#4a4a4a"><path d="M16 3l-5 8h8l-9 8h8l-6 8" fill="none" stroke="#ddd" strokeWidth="2" /></Sq>
            </Cell>
            <Cell>
              <Sq bg="#555"><rect x="4" y="5" width="22" height="5" fill="#ccc" stroke="#111" /><rect x="4" y="12" width="22" height="5" fill="#ccc" stroke="#111" /><rect x="4" y="19" width="22" height="5" fill="#ccc" stroke="#111" /></Sq>
            </Cell>
          </Col>
        </Group>
      </div>
      <div className="mr-[5px]">
        <Group width="w-[133px]" label="Util" plus>
          <Col>
            <Cell>
              <svg width="30" height="32" viewBox="0 0 30 32">
                <path d="M8 22c2-7 6-14 10-18M22 23c0-8-2-14-4-19" fill="none" stroke="#5a3a1a" />
                <path d="M12 6c3-5 8-5 11-5-2 4-5 6-11 5z" fill="#5aa03a" />
                <circle cx="8" cy="24" r="6.5" fill="#d41f1f" />
                <circle cx="22" cy="25" r="6.5" fill="#c81818" />
              </svg>
            </Cell>
            <Cell>
              <Sq bg="#999"><path d="M15 27V14M15 17L7 11M15 16l8-7M9 12L5 7M11 14l-1-7M19 12l0-7M22 10l4-3M5 11h4M22 14l4 0" stroke="#111" strokeWidth="1.6" fill="none" /><circle cx="15" cy="11" r="7" fill="#333" fillOpacity="0.5" /></Sq>
            </Cell>
          </Col>
          <Sep />
          <Col>
            <Cell><svg width="28" height="22" viewBox="0 0 28 22"><path d="M1 7h14V1l12 10-12 10v-6H1z" fill="#454545" stroke="#222" /></svg></Cell>
            <Cell><svg width="28" height="22" viewBox="0 0 28 22"><path d="M1 7h14V1l12 10-12 10v-6H1z" fill="#e8e8e8" stroke="#777" /></svg></Cell>
          </Col>
          <Sep />
          <Col>
            <Cell><svg width="28" height="28" viewBox="0 0 28 28"><circle cx="13" cy="13" r="11" fill="#bbb" stroke="#666" /><circle cx="18" cy="18" r="8" fill="#c8327a" /><circle cx="9" cy="9" r="3" fill="#eee" /></svg></Cell>
            <Cell><svg width="26" height="30" viewBox="0 0 26 30"><path d="M10 2h6v9l8 16c0 2-1 2-3 2H5c-2 0-3 0-3-2l8-16z" fill="#f6e6ee" stroke="#777" /><path d="M6 18h14l4 9c0 2-1 2-3 2H5c-2 0-3 0-3-2z" fill="#e8408f" /></svg></Cell>
          </Col>
        </Group>
      </div>
      <div className="mr-[5px]">
        <Group width="w-[122px]" label="Architectural inputs" plus={false}>
          <Col>
            <Cell><Sq bg="#6bbcee"><path d="M8 26V8M15 26V8M22 26V8" stroke="#0d2a44" strokeWidth="3.4" /><path d="M5 9l3-5 3 5zM12 9l3-5 3 5zM19 9l3-5 3 5z" fill="#111" /></Sq></Cell>
            <Cell><Sq bg="#a9dcf4"><rect x="1" y="1" width="28" height="11" fill="#eee" /><path d="M4 14h20l-2 5H4z" fill="#999" stroke="#555" strokeDasharray="2 1" /></Sq></Cell>
          </Col>
          <Sep />
          <Col>
            <Cell><Sq bg="#5bb5e6"><path d="M7 6h16v4h-5v10h5v4H7v-4h5V10H7z" fill="#1c4f78" stroke="#fff" /><rect x="2" y="2" width="4" height="4" fill="#fff" stroke="#111" /><rect x="24" y="2" width="4" height="4" fill="#fff" stroke="#111" /><rect x="2" y="24" width="4" height="4" fill="#fff" stroke="#111" /><rect x="24" y="24" width="4" height="4" fill="#fff" stroke="#111" /></Sq></Cell>
            <Cell><Sq bg="#a9dcf4"><path d="M4 22L22 4l5 9-16 14z" fill="#3f8fca" stroke="#123" /><path d="M2 14h26M18 2v26" stroke="#123" /></Sq></Cell>
            <Cell><Sq bg="#5bb5e6"><circle cx="15" cy="15" r="11" fill="#2a6ea3" stroke="#fff" strokeDasharray="2 1.4" /><circle cx="15" cy="15" r="5" fill="#8fd0f2" stroke="#123" /></Sq></Cell>
          </Col>
        </Group>
      </div>
      <div className="mr-[4px]">
        <Group width="w-[144px]" label="Architectural objects" plus>
          <Col>
            <Cell><Hex>{g.target}</Hex></Cell>
            <Cell><Hex>{g.beam}</Hex></Cell>
            <Cell><Hex>{g.column}</Hex></Cell>
            <Cell><Hex>{g.wall}</Hex></Cell>
            <Cell><Hex>{g.door}</Hex></Cell>
            <Cell><Hex>{g.person}</Hex></Cell>
            <Cell><Hex>{g.chair}</Hex></Cell>
            <Cell><Hex>{g.window}</Hex></Cell>
          </Col>
        </Group>
      </div>
      <Group width="w-[144px]" label="Architectural styles" plus>
        <Col>
          <Cell><Hex>{g.target}<HexBadge /></Hex></Cell>
          <Cell><Hex>{g.beam}<HexBadge /></Hex></Cell>
          <Cell><Hex>{g.column}<HexBadge /></Hex></Cell>
          <Cell><Hex>{g.wall}<HexBadge /></Hex></Cell>
          <Cell><Hex>{g.door}<HexBadge /></Hex></Cell>
          <Cell><Hex>{g.person}<HexBadge /></Hex></Cell>
          <Cell><Hex>{g.chair}<HexBadge /></Hex></Cell>
          <Cell><Hex>{g.window}<HexBadge /></Hex></Cell>
        </Col>
      </Group>
    </div>
  );
}

function Caret() {
  return (
    <svg width="7" height="5" viewBox="0 0 7 5" className="shrink-0">
      <path d="M0 0h7L3.5 4z" fill="#111" />
    </svg>
  );
}

function GhToolbar() {
  return (
    <div className="h-[39px] shrink-0 flex items-center bg-gradient-to-b from-white to-[#eef0f6] pl-[5px]">
      <svg width="26" height="32" viewBox="0 0 26 32" className="ml-[1px]">
        <path d="M4 1h12l6 5v8H4z" fill="#ddd" stroke="#999" />
        <path d="M1 11h14l3-3h7v23H1z" fill="#7fc04a" stroke="#4a7a2a" />
      </svg>
      <svg width="28" height="30" viewBox="0 0 28 30" className="ml-[10px]">
        <rect x="1" y="1" width="26" height="28" rx="2" fill="#2d6eb0" stroke="#17406e" />
        <rect x="5" y="3" width="18" height="12" fill="#dfe6ee" />
        <path d="M6 7h16M6 11h16" stroke="#9ab" />
        <rect x="8" y="19" width="12" height="10" fill="#d9e4ef" />
        <rect x="11" y="21" width="4" height="7" fill="#2d6eb0" />
      </svg>
      <div className="w-px h-[28px] bg-[#bbb] ml-[7px]" />
      <div className="w-[180px] h-[28px] ml-[5px] bg-white border border-[#8f8f8f] rounded-[3px] flex items-center justify-between pl-[3px] pr-[8px] text-[14px] text-[#111]">
        125%
        <svg width="10" height="6" viewBox="0 0 10 6"><path d="M0.5 0.5L5 5l4.5-4.5" fill="none" stroke="#555" /></svg>
      </div>
      <svg width="28" height="28" viewBox="0 0 28 28" className="ml-[6px]">
        <path d="M8 2H2v6M20 2h6v6M8 26H2v-6M20 26h6v-6" fill="none" stroke="#111" strokeWidth="3" />
        <path d="M11 11l6 6M17 11l-6 6" stroke="#222" strokeWidth="2" />
      </svg>
      <div className="ml-[8px]"><Caret /></div>
      <svg width="28" height="20" viewBox="0 0 28 20" className="ml-[7px]">
        <path d="M1 10c6-11 20-11 26 0-6 11-20 11-26 0z" fill="#fff" stroke="#222" strokeWidth="1.6" />
        <circle cx="14" cy="10" r="7" fill="#3fa0dd" stroke="#124" />
        <circle cx="14" cy="10" r="3" fill="#102030" />
      </svg>
      <div className="ml-[8px]"><Caret /></div>
      <svg width="28" height="28" viewBox="0 0 28 28" className="ml-[6px]">
        <path d="M3 26c-3-8 5-8 4-2 2-5 10-10 18-22-2 10-4 19-13 21-2 0-3-3-5-2" fill="#d8442a" stroke="#5a1a10" />
      </svg>
      <div className="flex-1" />
      <svg width="24" height="30" viewBox="0 0 24 30" className="mr-[10px]">
        <ellipse cx="13" cy="9" rx="9" ry="8" fill="#e8e8e8" stroke="#888" />
        <ellipse cx="11" cy="22" rx="10" ry="7" fill="#2a2a2a" />
      </svg>
      <svg width="28" height="28" viewBox="0 0 28 28" className="mr-[4px]">
        <path d="M3 14L14 3c3-2 9-2 11 3s0 8-2 10L13 26c-5 2-11-7-10-12z" fill="#eee" stroke="#666" />
        <ellipse cx="19" cy="9" rx="5" ry="5" fill="#ddd" stroke="#666" />
      </svg>
      <div className="w-[34px] h-[34px] border border-[#1a67a8] bg-white flex items-center justify-center">
        <svg width="28" height="28" viewBox="0 0 28 28">
          <path d="M3 14L14 3c3-2 9-2 11 3s0 8-2 10L13 26c-5 2-11-7-10-12z" fill="#bf1616" stroke="#5a0c0c" />
          <ellipse cx="19" cy="9" rx="5" ry="5" fill="#d32a2a" stroke="#5a0c0c" />
        </svg>
      </div>
      <div className="w-px h-[24px] bg-[#bbb] ml-[8px] mr-[9px]" />
      <svg width="28" height="28" viewBox="0 0 28 28" className="mr-[7px]">
        <path d="M3 14L14 3l11 11-11 11z" fill="#ddd" stroke="#777" />
        <circle cx="18" cy="11" r="8" fill="#4c9e1f" stroke="#254" />
        <path d="M3 6l20 20" stroke="#333" />
      </svg>
      <svg width="28" height="28" viewBox="0 0 28 28" className="mr-[7px]">
        <circle cx="14" cy="14" r="13" fill="#eee" stroke="#888" />
        <path d="M14 1a13 13 0 0 0 0 26z" fill="#e27a1e" />
      </svg>
      <div className="w-px h-[24px] bg-[#bbb] mr-[6px]" />
      <svg width="24" height="26" viewBox="0 0 24 26" className="mr-[6px]">
        <path d="M7 1h10l6 7v10l-6 7H7l-6-7V8z" fill="#66aee6" stroke="#1d3f6a" />
      </svg>
      <div className="mr-[6px]"><Caret /></div>
    </div>
  );
}

function Canvas() {
  const hGrid = [274, 337, 399, 461, 525, 588, 650, 713, 776, 838, 901];
  const vGrid = [1064, 1252, 1439, 1815];
  return (
    <div className="relative flex-1 overflow-hidden bg-[#d5cfc2]">
      <svg className="absolute inset-0 w-full h-full" viewBox="962 216 958 746" preserveAspectRatio="none">
        <defs>
          <linearGradient id="edge" x1="0" x2="1" y1="0" y2="0">
            <stop offset="0" stopColor="#cecbbf" />
            <stop offset="0.35" stopColor="#b8b6ab" />
            <stop offset="0.75" stopColor="#8f8f8c" />
            <stop offset="1" stopColor="#8a8a8a" />
          </linearGradient>
          <radialGradient id="dial"><stop offset="0" stopColor="#f2f2f2" /><stop offset="1" stopColor="#bcbcb8" /></radialGradient>
        </defs>
        <rect x="962" y="216" width="665" height="746" fill="#cecbbf" />
        <rect x="1597" y="216" width="30" height="746" fill="url(#edge)" />
        {hGrid.map((y) => <path key={y} d={`M962 ${y}H1917`} stroke="#bbb8ab" strokeWidth="1" />)}
        {vGrid.map((x) => <path key={x} d={`M${x} 216V962`} stroke="#c2c0b6" strokeWidth="1" />)}
        <ellipse cx="1316.5" cy="569" rx="263.5" ry="330.5" fill="#ef8582" stroke="#b18a7e" strokeWidth="0.8" />
        <path d="M1627 216V962" stroke="#000" strokeWidth="1.2" />
        {wires.map((d) => <path key={d} d={d} fill="none" stroke="#444" strokeOpacity="0.92" strokeWidth="3" />)}
        <path d="M1442 548C1500 547 1570 546 1627 545" fill="none" stroke="#111" strokeWidth="3.4" />
        <path d="M1442 549C1500 550 1570 556 1627 565" fill="none" stroke="#444" strokeWidth="2.4" />
        <rect x="1858" y="889" width="8" height="7" fill="#111" transform="rotate(25 1862 892)" />
        <ellipse cx="1882" cy="927" rx="27" ry="27" fill="#111" />
        <circle cx="1882" cy="927" r="23.5" fill="url(#dial)" stroke="#eee" strokeWidth="1.5" />
        <path d="M1867 910l7 0-5 5zM1897 910l-7 0 5 5zM1867 944l7 0-5-5zM1897 944l-7 0 5-5z" fill="#fff" />
      </svg>
      <div className={FONT}>
        {sliders.map((s) => <Slider key={s.label} s={s} />)}
      </div>
      {/* bottom-left widget toolbar */}
      <div className="absolute left-[1px] bottom-0 w-[149px] h-[35px] border-t-2 border-r-2 border-[#111] bg-gradient-to-b from-[#bdbdbd] via-[#e8e8e8] to-[#b8b8b8] flex items-center pl-[6px] gap-[12px]">
        <Sq bg="#a5a5a5" size={23}><path d="M15 6v9M10 12l5 5 5-5z" stroke="#111" fill="#111" strokeWidth="2" /><path d="M5 22h20" stroke="#222" strokeWidth="2" /></Sq>
        <Sq bg="#ffcb2f" size={23}><path d="M4 23c3-1 4-5 6-3s3-7 5-3 3-8 5-4 3-4 5-2" fill="none" stroke="#a9601a" strokeWidth="2.6" /></Sq>
        <svg width="24" height="28" viewBox="0 0 26 30">
          <text x="7" y="8" fontSize="8" fontFamily="Liberation Sans">min</text>
          <text x="14" y="14" fontSize="8" fontFamily="Liberation Sans">max</text>
          <path d="M5 10v12M22 16v6" stroke="#333" />
          <path d="M3 24h20" stroke="#222" />
          <rect x="7" y="23" width="13" height="3" fill="#58b7a5" />
        </svg>
        <svg width="20" height="24" viewBox="0 0 20 24">
          <rect x="0.5" y="0.5" width="19" height="23" rx="3" fill="#e4e4e4" stroke="#333" />
          <text x="4" y="11" fontSize="10" fontFamily="Liberation Sans" fill="#222">A</text>
          <path d="M4 19L15 4" stroke="#222" />
          <text x="10" y="21" fontSize="10" fontFamily="Liberation Sans" fill="#222">B</text>
        </svg>
      </div>
    </div>
  );
}

export default function App() {
  return (
    <div className={`w-[1920px] h-[992px] flex overflow-hidden bg-white ${FONT}`}>
      {/* Rhino window */}
      <div className="w-[960px] h-full flex flex-col bg-[#eff0f5] shrink-0">
        <div className="h-[27px] shrink-0 flex items-center gap-[18.4px] pl-[9px] text-[14px] text-[#666] bg-[#f4f4f4]">
          {["File", "Edit", "View", "Curve", "Surface", "Solid", "Mesh", "Dimension", "Transform", "Tools", "Analyze", "Render", "Panels", "VisualARQ", "Help"].map((m) => (
            <span key={m}>{m}</span>
          ))}
        </div>
        <div className="h-[61px] shrink-0 ml-[8px] mr-[2px] bg-white text-[14.6px] text-black">
          <div className="h-[38px] border-b border-[#c4cad8] leading-[18.5px]">
            <div>Command: '_Zoom</div>
            <div className="whitespace-nowrap">Drag a window to zoom ( All&nbsp; Dynamic&nbsp; Extents&nbsp; Factor&nbsp; In&nbsp; Out&nbsp; Selected&nbsp; Target&nbsp; 1To1 ): _Selected</div>
          </div>
          <div className="h-[23px] flex items-center font-bold">Command:</div>
        </div>
        <div className="h-[23px] shrink-0 mt-[9px] pl-[5px] flex border-b border-[#c4cad8]">
          <Tab label="Standard" width="w-[96px]" active />
          <Tab label="CPlanes" width="w-[81px]" />
          <Tab label="Set View" width="w-[83px]" />
          <Tab label="Display" width="w-[84px]" />
          <Tab label="Select" width="w-[69px]" />
          <Tab label="Viewport Layout" width="w-[136px]" />
          <Tab label="Visibility" width="w-[86px]" />
          <Tab label="Transform" width="w-[98px]" />
          <Tab label="Curve Tools" width="w-[104px]" />
          <Tab label="Surface Tools" width="w-[118px]" />
        </div>
        <div className="h-[34px] shrink-0 flex items-center pl-[9px]">
          {standardIcons.map((ic, i) => (
            <div key={i} className="w-[28.3px] flex items-center justify-center">
              <Ic tri={ic.tri}>{ic.el}</Ic>
            </div>
          ))}
        </div>
        <div className="h-[22px] shrink-0 mt-[8px] pl-[5px] flex border-b border-[#c4cad8]">
          <Tab label="VisualARQ Objects" width="w-[158px]" active />
          <Tab label="VisualARQ Edit" width="w-[129px]" />
          <Tab label="VisualARQ Documentation" width="w-[207px]" />
          <Tab label="VisualARQ Tools" width="w-[137px]" />
        </div>
        <div className="h-[33px] shrink-0 flex items-center pl-[9px]">
          {vaIcons.map((ic, i) => (
            <div key={i} className="w-[28px] flex items-center justify-center">
              <Ic tri={ic.tri}>{ic.el}</Ic>
            </div>
          ))}
        </div>
        <div className="h-[20px] shrink-0" />
        <div className="h-[667px] shrink-0 flex">
          <div className="w-[65px] shrink-0 flex flex-col">
            <div className="h-px mx-[3px] mt-[4px] bg-[#c6d3da]" />
            <div className="pt-[5px] grid grid-cols-2 auto-rows-[28.25px] content-start">
              {toolIcons.map((el, i) => (
                <div key={i} className={`flex items-center ${i % 2 === 0 ? "pl-[3px]" : "pl-0"}`}>
                  <Ic tri={i % 2 === 1 || i > 1} size={22}>{el}</Ic>
                </div>
              ))}
            </div>
          </div>
          <div className="relative flex-1 bg-white border-t border-l border-b border-[#c4cad8]">
            <svg className="absolute inset-0 w-full h-full" viewBox="65 237 895 667" preserveAspectRatio="none">
              <Model />
              <path d="M108 847V824M108 847L89 857M108 847L138 843M108 847L98 861" stroke="#333" strokeWidth="1" fill="none" />
              <text x="110" y="829" fontSize="13" fill="#333" fontFamily="Liberation Sans">z</text>
              <text x="84" y="848" fontSize="13" fill="#333" fontFamily="Liberation Sans">y</text>
              <text x="139" y="846" fontSize="13" fill="#333" fontFamily="Liberation Sans">x</text>
              <path d="M288 866l3 2" stroke="#222" strokeWidth="1.4" />
            </svg>
            <div className="absolute left-0 top-0 w-[83px] h-[22px] bg-[#7f9dc4] flex items-center text-[13.5px] font-bold text-black pl-[9px]">
              Parallel
              <div className="absolute right-[11px] top-0 h-full w-px bg-[#222]" />
              <div className="absolute right-[2px] top-[8px]"><Caret /></div>
            </div>
          </div>
        </div>
        <div className="h-[33px] shrink-0 flex pl-[66px] pt-[2px]">
          <div className="flex h-[26px] text-[14px] text-[#111]">
            <div className="w-[67px] bg-[#f5f6fa] border-b border-r border-[#c4cad8] flex items-center justify-center [clip-path:polygon(0_0,100%_0,100%_100%,7px_100%)]">Parallel</div>
            <div className="w-[51px] bg-[#d9d9d9] flex items-center justify-center [clip-path:polygon(0_0,100%_0,100%_100%,7px_100%)]">Top</div>
            <div className="w-[58px] bg-[#d9d9d9] flex items-center justify-center [clip-path:polygon(0_0,100%_0,100%_100%,7px_100%)]">Front</div>
            <div className="w-[58px] bg-[#d9d9d9] flex items-center justify-center [clip-path:polygon(0_0,100%_0,100%_100%,7px_100%)]">Right</div>
            <div className="w-[28px] ml-[3px] bg-[#f3f4f8] border-b border-x border-[#c4cad8] flex items-center justify-center text-[#777]">+</div>
          </div>
        </div>
        <div className="h-[31px] shrink-0 flex items-center pl-[12px] text-[14px] text-[#111]">
          <Check label="End" state="on" width="w-[53px]" />
          <Check label="Near" state="on" width="w-[60px]" />
          <Check label="Point" state="on" width="w-[62px]" />
          <Check label="Mid" state="on" width="w-[54px]" />
          <Check label="Cen" state="off" width="w-[53px]" />
          <Check label="Int" state="on" width="w-[46px]" />
          <Check label="Perp" state="on" width="w-[57px]" />
          <Check label="Tan" state="off" width="w-[52px]" />
          <Check label="Quad" state="off" width="w-[64px]" />
          <Check label="Knot" state="off" width="w-[60px]" />
          <Check label="Vertex" state="off" width="w-[71px]" />
          <Check label="Project" state="faint" width="w-[85px]" />
          <Check label="Disable" state="faint" width="" />
        </div>
        <div className="h-[24px] shrink-0 flex items-center border-t border-[#cfd3dd] text-[14px] text-[#111] overflow-hidden">
          <StatusCell label="CPlane" className="w-[59px]" />
          <StatusCell label="x 48672.728" className="w-[108px]" />
          <StatusCell label="y 8502.800" className="w-[109px]" />
          <StatusCell label="z 0.000" className="w-[108px]" />
          <StatusCell label="Millimeters" className="w-[108px]" />
          <div className="w-[208px] h-full flex items-center pl-[4px] shrink-0">
            <span className="w-[14px] h-[15px] bg-black mr-[4px]" />
            Default
          </div>
          <StatusCell label="Grid Snap" className="w-[81px] font-bold bg-[#e3f3fb]" />
          <StatusCell label="Ortho" className="w-[54px]" />
          <StatusCell label="Planar" className="w-[57px]" />
          <StatusCell label="Osnap" className="w-[57px] font-bold bg-[#e3f3fb]" />
          <span className="font-bold pl-[4px]">S</span>
        </div>
      </div>

      {/* Grasshopper window */}
      <div className="flex-1 h-full flex flex-col border-l-2 border-[#8a8a8a] border-r-[3px] border-r-[#e4e4e8] bg-[#f2f3f8]">
        <div className="h-[8px] shrink-0 bg-white" />
        <div className="h-[34px] shrink-0 flex items-center pl-[14px] pr-[11px] text-[14px] text-[#111]">
          <span className="w-[44px]">File</span>
          <span className="w-[47px]">Edit</span>
          <span className="w-[53px]">View</span>
          <span className="w-[70px]">Display</span>
          <span className="w-[76px]">Solution</span>
          <span>Help</span>
          <span className="ml-auto text-[14.4px]">220225_UJ_geometry generation</span>
        </div>
        <div className="h-[28px] shrink-0 flex text-[14px] text-[#888] border-b border-[#b8b8bc]">
          <div className="w-[36px] h-full flex items-center justify-center bg-[#f8f8fb] text-[#8a1f2f] rounded-t-[4px] border border-b-0 border-[#bbb]">P</div>
          {ribbonLetters.map((l, i) => (
            <div key={i} className="w-[35px] h-full flex items-center justify-center">{l}</div>
          ))}
          <span className="pt-[2px] pl-[3px]">K</span>
        </div>
        <Ribbon />
        <GhToolbar />
        <Canvas />
        <div className="h-[30px] shrink-0 flex items-center pl-[4px] pr-[36px] border-t border-[#aeb2bb] text-[14px] text-[#333] bg-[#f2f3f8]">
          <svg width="20" height="22" viewBox="0 0 20 22" className="mr-[4px]">
            <ellipse cx="10" cy="11" rx="9.5" ry="10.5" fill="#2d71b5" stroke="#12315a" />
            <rect x="8.5" y="4" width="3" height="9" fill="#fff" />
            <rect x="8.5" y="15" width="3" height="3" fill="#fff" />
          </svg>
          Autosave complete (160 seconds ago)
          <span className="ml-auto text-[13px] text-[#666]">1.0.0007</span>
        </div>
      </div>
      <svg width="0" height="0" className="absolute">
        <defs>
          <linearGradient id="wheel" x1="0" x2="1" y1="0" y2="1">
            <stop offset="0" stopColor="#e8452a" />
            <stop offset="0.35" stopColor="#f2c21e" />
            <stop offset="0.65" stopColor="#35a04a" />
            <stop offset="1" stopColor="#2a5ec0" />
          </linearGradient>
        </defs>
      </svg>
    </div>
  );
}
